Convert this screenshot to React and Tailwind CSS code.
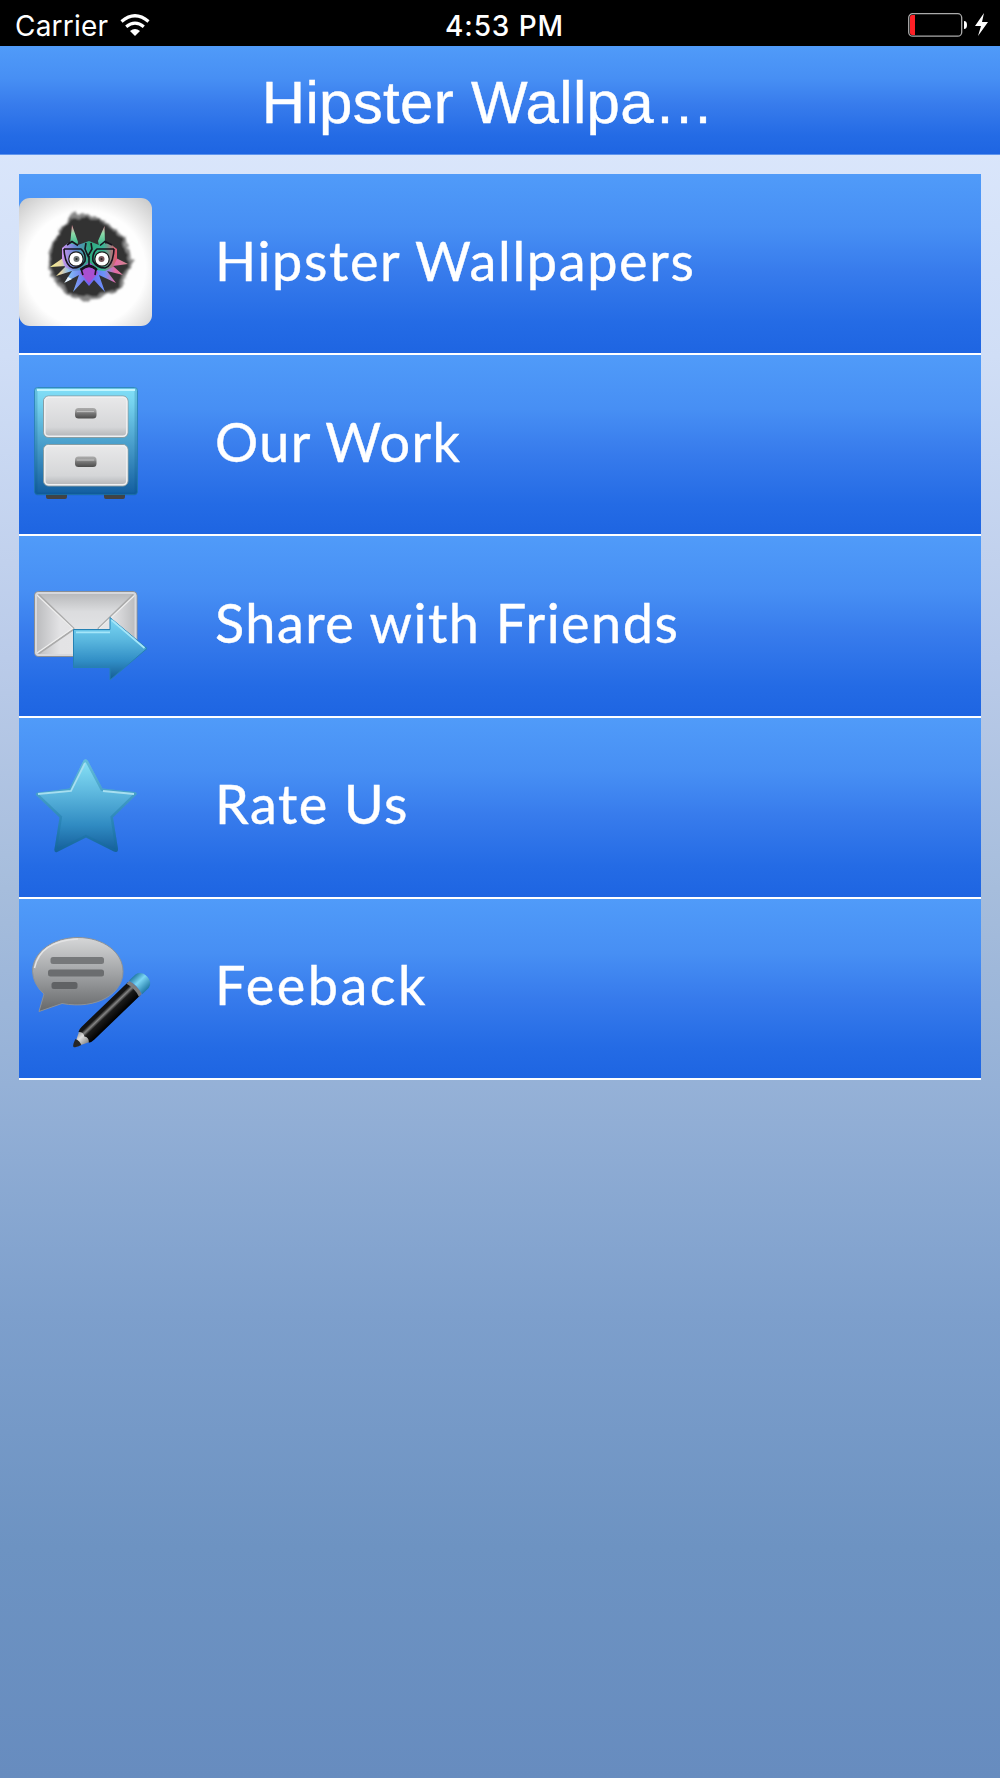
import React from 'react';

const MaskIcon = () => (
  <svg width="133" height="128" viewBox="0 0 133 128" className="block">
    <defs>
      <radialGradient id="paper" cx="0.5" cy="0.55" r="0.75">
        <stop offset="0.6" stopColor="#fefefe" />
        <stop offset="1" stopColor="#c4c4c4" />
      </radialGradient>
      <linearGradient id="spikes" gradientUnits="userSpaceOnUse" x1="31" y1="0" x2="108" y2="0">
        <stop offset="0" stopColor="#f4f28c" />
        <stop offset="0.14" stopColor="#e6d3a4" />
        <stop offset="0.26" stopColor="#7fb8f4" />
        <stop offset="0.5" stopColor="#6f62f0" />
        <stop offset="0.7" stopColor="#6a93fa" />
        <stop offset="0.85" stopColor="#e56aa4" />
        <stop offset="1" stopColor="#d18890" />
      </linearGradient>
      <linearGradient id="face" gradientUnits="userSpaceOnUse" x1="43" y1="0" x2="98" y2="0">
        <stop offset="0" stopColor="#cf94f0" />
        <stop offset="0.25" stopColor="#5f88d0" />
        <stop offset="0.5" stopColor="#2fa97e" />
        <stop offset="0.75" stopColor="#3ab596" />
        <stop offset="1" stopColor="#ea566e" />
      </linearGradient>
      <linearGradient id="horn" x1="0" y1="0" x2="0" y2="1">
        <stop offset="0" stopColor="#ee7f98" />
        <stop offset="0.4" stopColor="#8edba8" />
        <stop offset="1" stopColor="#2fb38a" />
      </linearGradient>
      <filter id="ink" x="-10%" y="-10%" width="120%" height="120%">
        <feTurbulence type="fractalNoise" baseFrequency="0.12" numOctaves="3" seed="4" />
        <feDisplacementMap in="SourceGraphic" scale="7" xChannelSelector="R" yChannelSelector="G" />
        <feGaussianBlur stdDeviation="1" />
      </filter>
    </defs>
    <rect width="133" height="128" rx="11" fill="url(#paper)" />
    <g filter="url(#ink)" transform="translate(-2.8 -2.4) scale(1.04)">
      <path d="M51 24 52 17 56 15 61 19 76 19 82 23 94 31 105 41 109 54 113 63 107 73 103 88 91 94 78 98 68 103 57 98 45 93 38 82 30 70 31 54 38 41 43 29Z" fill="#858585" />
      <path d="M56 22 79 22 91 31 103 42 107 57 109 65 103 76 99 89 83 94 68 98 51 94 42 84 33 71 33 56 39 40 46 28Z" fill="#303030" />
    </g>
    <path d="M53 27 59 44 58 48 51 47ZM85.5 28 86 46 80 48 79 43Z" fill="url(#horn)" />
    <path d="M44 60 31 69 47 68 37 78 53 73 45 85 60 77 54 94 65 82 70 88 75 82 86 94 80 77 97 85 88 73 104 77 94 68 109 66 97 60Z" fill="url(#spikes)" />
    <path d="M46 84.5 49 79 53 81Z" fill="#e9f3fb" />
    <path d="M43 50 49 45 59 47 70 43 80 47 90 45 98 51 98 61 94 69 86 73 76 72 70 80 64 72 54 73 46 69 43 61Z" fill="url(#face)" />
    <path d="M66 68 70 64 76 69 79 75 70 85 61 75Z" fill="#a94fd0" />
    <path d="M45 51H62Q67 55 66 63Q62 70 54 70Q46 68 45 51M95 51H78Q73 55 74 63Q78 70 86 70Q94 68 95 51M67 45 66 51 69 58 73 51 72 45M70 58V67L62 71 64 77M70 67 77 71 76 77M48 47 53 43.5 59 47.5M81 47.5 86 43.5 93 47" fill="none" stroke="#17131d" strokeWidth="1.6" />
    <path d="M62 72Q70 64 78 72" fill="none" stroke="#17131d" strokeWidth="2.2" />
    <circle cx="57" cy="61" r="7.2" fill="#fff" stroke="#1b1b1b" strokeWidth="1.2" />
    <circle cx="83" cy="61" r="7.2" fill="#fff" stroke="#1b1b1b" strokeWidth="1.2" />
    <circle cx="57.5" cy="61" r="3" fill="#6d7374" />
    <circle cx="82.5" cy="61" r="3" fill="#76565b" />
    <circle cx="57.5" cy="61" r="1" fill="#222" />
    <circle cx="82.5" cy="61" r="1" fill="#222" />
  </svg>
);

const CabinetIcon = () => (
  <svg width="104" height="112" viewBox="0 0 104 112" className="block">
    <defs>
      <linearGradient id="cabinet" x1="0" y1="0" x2="0" y2="1">
        <stop stopColor="#82dff8" />
        <stop offset="0.15" stopColor="#75d2ee" />
        <stop offset="1" stopColor="#125d9f" />
      </linearGradient>
      <linearGradient id="drawer" x1="0" y1="0" x2="0" y2="1">
        <stop stopColor="#e9e9ea" />
        <stop offset="0.75" stopColor="#d5d6d8" />
        <stop offset="1" stopColor="#b0b2b5" />
      </linearGradient>
      <linearGradient id="handle" x1="0" y1="0" x2="0" y2="1">
        <stop stopColor="#aaa" />
        <stop offset="0.35" stopColor="#999" />
        <stop offset="0.5" stopColor="#777" />
        <stop offset="1" stopColor="#4c4c4c" />
      </linearGradient>
    </defs>
    <path d="M12 106h21v4q0 2-2 2H14q-2 0-2-2zM70 106h21v4q0 2-2 2H72q-2 0-2-2z" fill="#434343" />
    <rect x="0.5" y="0.5" width="103" height="107" rx="3" fill="url(#cabinet)" stroke="#247fae" strokeOpacity="0.7" />
    <rect x="2" y="2" width="100" height="105" rx="2" fill="none" stroke="#075082" strokeOpacity="0.2" strokeWidth="3" />
    <path d="M3 3H101" stroke="#c2f6ff" strokeWidth="2" />
    {[9, 57.5].map((y) => (
      <g key={y}>
        <rect x="9.5" y={y} width="84.5" height="41.5" rx="5" fill="url(#drawer)" stroke="#879da4" />
        <rect x="10.8" y={y + 1.3} width="82" height="39" rx="4" fill="none" stroke="#f0f0f1" strokeWidth="1.5" />
        <rect x="41" y={y + 12} width="21.5" height="10.5" rx="3.5" fill="url(#handle)" />
        <path d={`M43 ${y + 15.5}H60`} stroke="#bcbcbc" />
      </g>
    ))}
  </svg>
);

const ShareIcon = () => (
  <svg width="114" height="90" viewBox="0 0 114 90" className="block">
    <defs>
      <linearGradient id="flap" x1="0" y1="0" x2="0" y2="1">
        <stop stopColor="#b9babc" />
        <stop offset="0.5" stopColor="#dbdcde" />
        <stop offset="1" stopColor="#e2e2e4" />
      </linearGradient>
      <linearGradient id="envelopeSide">
        <stop stopColor="#b8b9bb" />
        <stop offset="0.25" stopColor="#e3e3e5" />
        <stop offset="0.75" stopColor="#e5e5e7" />
        <stop offset="1" stopColor="#b8b9bb" />
      </linearGradient>
      <linearGradient id="arrow" x1="0" y1="0" x2="0" y2="1">
        <stop stopColor="#7dd8f5" />
        <stop offset="0.35" stopColor="#5bb8df" />
        <stop offset="0.7" stopColor="#308dc5" />
        <stop offset="1" stopColor="#145b91" />
      </linearGradient>
    </defs>
    <rect x="0.5" y="0.5" width="102.5" height="65" rx="4" fill="url(#envelopeSide)" stroke="#898e94" />
    <path d="M3 3H101L64 38H40Z" fill="url(#flap)" />
    <path d="M4 3 40 38M64 38 100 3M4 63 40 38" fill="none" stroke="#aaa" strokeWidth="2" />
    <path d="M3 4 39 38M101 4 65 38M3 62 39 37" fill="none" stroke="#eee" strokeWidth="1.2" />
    <rect x="2" y="2" width="99.5" height="62" rx="3" fill="none" stroke="#d7d8dc" strokeWidth="2" />
    <path d="M39.5 38.5H76V26.5L113 57.5 76 89V76.5H39.5Z" fill="url(#arrow)" stroke="#2581b3" strokeLinejoin="round" />
    <path d="M42 41.3H76M77.5 29 110.5 57" fill="none" stroke="#a4e6f9" strokeWidth="1.8" />
  </svg>
);

const StarIcon = () => (
  <svg width="102" height="96" viewBox="0 0 102 96" className="block">
    <defs>
      <linearGradient id="star" x1="0" y1="0" x2="0" y2="1">
        <stop stopColor="#8ae5f8" />
        <stop offset="0.35" stopColor="#5fb9df" />
        <stop offset="0.7" stopColor="#308bc2" />
        <stop offset="1" stopColor="#125a97" />
      </linearGradient>
      <clipPath id="starEdge">
        <path d="M48.5 2.5Q51 0 53 3L67.5 30.5 100 34Q103 35 101 37L78 59.5 83 91Q83 95 79 93.5L51 79.5 22 94Q19 95 19.5 91L24.5 59.5 1 37Q0 35 3 34.5L34.5 30.5Z" />
      </clipPath>
    </defs>
    <g clipPath="url(#starEdge)">
      <path d="M0 0H102V96H0Z" fill="url(#star)" />
      <path d="M48.5 2.5Q51 0 53 3L67.5 30.5 100 34Q103 35 101 37L78 59.5 83 91Q83 95 79 93.5L51 79.5 22 94Q19 95 19.5 91L24.5 59.5 1 37Q0 35 3 34.5L34.5 30.5Z" fill="none" stroke="#16709d" strokeOpacity="0.32" strokeWidth="5" />
    </g>
    <path d="M3 36 36 33 50 5M68 33 99 36" fill="none" stroke="#a7dff0" strokeWidth="1.8" />
  </svg>
);

const FeedbackIcon = () => (
  <svg width="122" height="112" viewBox="0 0 122 112" className="block">
    <defs>
      <linearGradient id="bubble" x1="0" y1="0" x2="0" y2="1">
        <stop stopColor="#d6d7d8" />
        <stop offset="0.5" stopColor="#a0a2a4" />
        <stop offset="1" stopColor="#66686a" />
      </linearGradient>
      <linearGradient id="pencil" x1="0" y1="0" x2="0" y2="1">
        <stop stopColor="#111" />
        <stop offset="0.2" stopColor="#151515" />
        <stop offset="0.36" stopColor="#858585" />
        <stop offset="0.52" stopColor="#1b1b1b" />
        <stop offset="1" stopColor="#000" />
      </linearGradient>
      <linearGradient id="wood" x1="0" y1="0" x2="0" y2="1">
        <stop stopColor="#8b8b8b" />
        <stop offset="0.4" stopColor="#dedede" />
        <stop offset="1" stopColor="#777" />
      </linearGradient>
      <linearGradient id="eraser" x1="0" y1="0" x2="0" y2="1">
        <stop stopColor="#247da7" />
        <stop offset="0.4" stopColor="#7cd6f4" />
        <stop offset="1" stopColor="#1f78a5" />
      </linearGradient>
    </defs>
    <path d="M46 0.5C21 0.5 0.5 15 0.5 34.5Q1 47 12 57L7 74.5 30 66.5C66 73 91 56 91 34.5 91 15 71 0.5 46 0.5Z" fill="url(#bubble)" stroke="#8d9297" />
    <path d="M2.5 31Q8 4 46 2" fill="none" stroke="#e4e4e5" strokeWidth="1.5" />
    <rect x="18.5" y="20" width="53.5" height="7" rx="2.5" fill="#76787a" />
    <rect x="16" y="32.5" width="56" height="7" rx="2.5" fill="#6b6d6f" />
    <rect x="19.5" y="45" width="26" height="7" rx="2.5" fill="#606264" />
    <g transform="translate(41.5 110) rotate(-43.8)">
      <path d="M1 0 17-8.5V8.5L2 1.5Z" fill="url(#wood)" />
      <path d="M0 0Q0-2 7-4.5Q9 0 7 4Q2 3 0 0Z" fill="#272727" />
      <path d="M14-7.5Q16-9 20-9H84V9H20Q16 9 14 7.5Q18 4 15 0Q18-4 14-7.5Z" fill="url(#pencil)" />
      <path d="M82-9H86Q89 0 86 9H82Q85 0 82-9Z" fill="#7c7c7c" />
      <path d="M86-9.5H95Q102-8 102 0T95 9.5H86Q89 0 86-9.5Z" fill="url(#eraser)" />
    </g>
  </svg>
);

const menuItems = [
  { label: 'Hipster Wallpapers', icon: MaskIcon, iconClass: 'pl-0 pt-6', textClass: 'tracking-[1.65px]' },
  { label: 'Our Work', icon: CabinetIcon, iconClass: 'pl-[15px] pt-8', textClass: 'tracking-[1.4px]' },
  { label: 'Share with Friends', icon: ShareIcon, iconClass: 'pl-[15px] pt-[55px]', textClass: 'tracking-[1.5px]' },
  { label: 'Rate Us', icon: StarIcon, iconClass: 'pl-4 pt-10', textClass: 'tracking-[1.5px]' },
  { label: 'Feeback', icon: FeedbackIcon, iconClass: 'pl-[13px] pt-[38px]', textClass: 'tracking-[2.5px]' },
];

const StatusBar = () => (
  <div className="grid h-[46px] grid-cols-3 items-center bg-black pt-1 pl-[15px] pr-3 font-[Inter,sans-serif] text-[28px] leading-none text-white">
    <div className="flex items-center gap-3">
      <span className="pt-0.5 tracking-[0.2px]">Carrier</span>
      <svg width="30" height="22" viewBox="0 0 30 22" fill="none" stroke="#fff" strokeWidth="3.2">
        <path d="M1.5 7.5Q15-4 28.5 7.5M6.2 12.7Q15 5.5 23.8 12.7" />
        <path d="M10 17Q15 13 20 17L15 22Z" fill="#fff" stroke="none" />
      </svg>
    </div>
    <span className="pl-1.5 pt-0.5 text-center font-medium tracking-[0.9px]">4:53 PM</span>
    <div className="flex items-center justify-end">
      <svg width="80" height="26" viewBox="0 0 80 26">
        <rect x="0.7" y="1.7" width="53" height="22.5" rx="4" fill="none" stroke="#aaa" strokeWidth="1.3" />
        <path d="M4 3H7V23H4Q2 23 2 21V5Q2 3 4 3Z" fill="#ff2027" />
        <path d="M56 9Q59 9 59 13T56 17Z" fill="#fff" />
        <path d="M76 1 67 14H73L70 24 80 10H74Z" fill="#fff" />
      </svg>
    </div>
  </div>
);

const MenuRow = ({ item }) => {
  const Icon = item.icon;
  return (
    <button className="flex border-b-2 border-white bg-[linear-gradient(to_bottom,#509bf9,#478ff4_30%,#377bec_55%,#246be5_83%,#1e65e2)] text-left">
      <span className={`w-[196px] shrink-0 ${item.iconClass}`}>
        <Icon />
      </span>
      <span className={`self-center whitespace-nowrap pb-1.5 font-[Lato,sans-serif] text-[54px] leading-none text-white [-webkit-text-stroke:0.4px_#fff] ${item.textClass}`}>
        {item.label}
      </span>
    </button>
  );
};

export default function App() {
  return (
    <div className="flex h-[1778px] w-[1000px] flex-col overflow-hidden bg-[linear-gradient(to_bottom,#dae6fb_8%,#d0def6_20%,#bacbe9_37%,#a6bddc_50%,#95b1d7_61%,#7d9fcc_74%,#6d93c2_87%,#678cbf_100%)]">
      <StatusBar />
      <header className="flex h-[109px] items-center justify-center border-b border-[#6095ed] bg-[linear-gradient(to_bottom,#509bf9,#478ff4_30%,#377bec_55%,#246be5_83%,#1e65e2)] pr-6 pt-1.5">
        <h1 className="whitespace-nowrap font-['Liberation_Sans',Arial,sans-serif] text-[60px] leading-none tracking-[0.3px] text-white [-webkit-text-stroke:0.4px_#fff]">
          Hipster Wallpa…
        </h1>
      </header>
      <main className="mx-[19px] mt-[19px] grid h-[906px] grid-rows-5">
        {menuItems.map((item) => (
          <MenuRow key={item.label} item={item} />
        ))}
      </main>
    </div>
  );
}
